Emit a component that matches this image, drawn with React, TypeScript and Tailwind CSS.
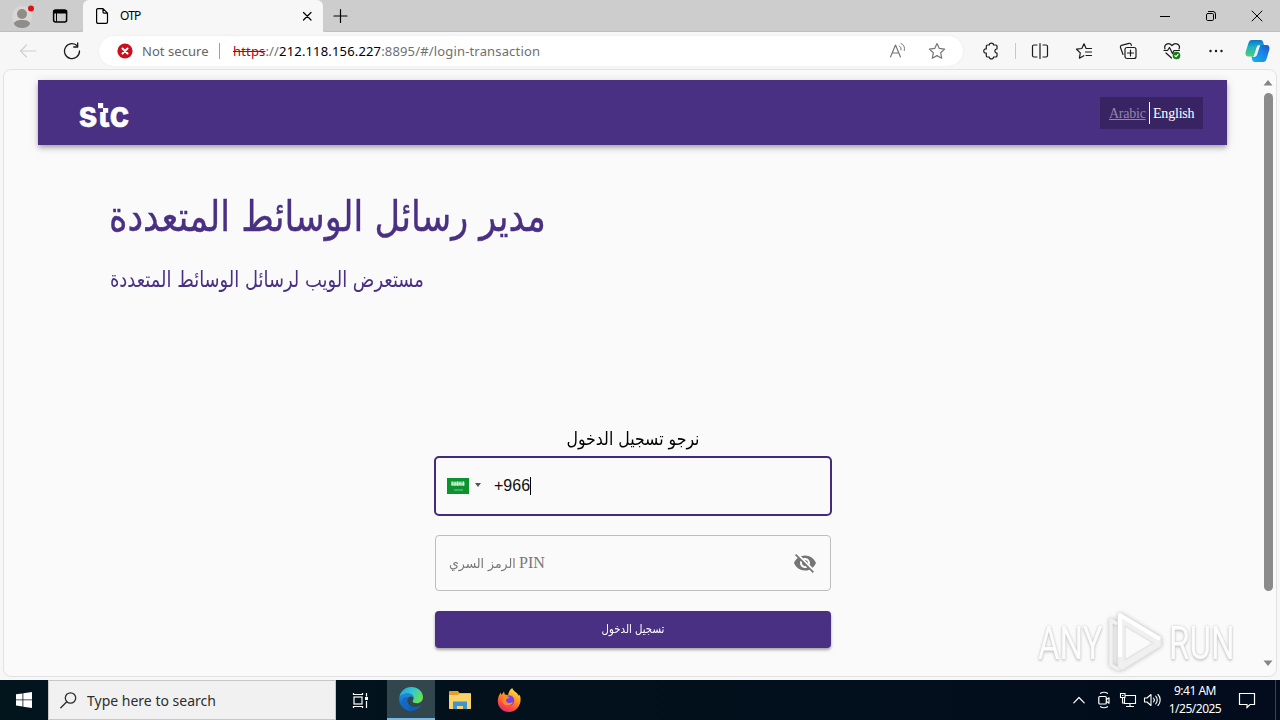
import type { ReactNode } from "react";

function Icon({ w = 20, h = 20, children, className = "" }: { w?: number; h?: number; children: ReactNode; className?: string }) {
  return (
    <svg
      width={w}
      height={h}
      viewBox={`0 0 ${w} ${h}`}
      fill="none"
      stroke="currentColor"
      strokeWidth="1.2"
      strokeLinecap="round"
      strokeLinejoin="round"
      className={`block shrink-0 ${className}`}
    >
      {children}
    </svg>
  );
}

function TitleBar() {
  return (
    <div className="flex h-8 shrink-0 bg-[#cdcdcd] text-black">
      <div className="flex w-[83px] shrink-0 items-center rounded-br-[4px] border-b border-[#bdbdbd] pl-[11px]">
        <svg width="26" height="28" viewBox="0 0 26 28" className="block">
          <circle cx="11" cy="14" r="10" fill="#d9d7d5" />
          <circle cx="11" cy="12" r="5" fill="#8f8c89" />
          <path d="M3 22c0-2.500 3-4 8-4s8 1.500 8 4c-2 3-5 4-8 4s-6-1-8-4z" fill="#8f8c89" />
          <circle cx="20" cy="6.500" r="3" fill="#e0101b" />
        </svg>
        <Icon w={16} h={16} className="ml-[15px]">
          <rect x="1.600" y="2" width="13" height="12" rx="2" strokeWidth="1.500" />
          <path d="M2 2.500h12.500v2.500h-12.500z" fill="currentColor" />
          <path d="M4.500 4v9.500" strokeWidth="1" />
        </Icon>
      </div>
      <div className="flex w-[240px] shrink-0 items-center rounded-t-[6px] bg-[#f7f7f7] pl-[12px] pr-[10px]">
        <Icon w={14} h={18}>
          <path d="M3 1.600h5l4.500 4.500v8.900a1.400 1.400 0 0 1-1.400 1.400H3a1.400 1.400 0 0 1-1.400-1.400V3A1.400 1.400 0 0 1 3 1.600zM8 1.600v3.500a1 1 0 0 0 1 1h3.500" />
        </Icon>
        <span className="ml-[11px] flex-1 text-[12px] leading-4 tracking-[-0.8px]">OTP</span>
        <Icon w={12} h={12}>
          <path d="M2.500 2.500l7.500 7.500M10 2.500l-7.500 7.500" />
        </Icon>
      </div>
      <div className="flex flex-1 items-center rounded-bl-[4px] border-b border-[#bdbdbd] pl-[9px]">
        <Icon w={16} h={16}>
          <path d="M8.500 1.500v13M2 8h13" />
        </Icon>
        <div className="flex-1" />
        <div className="flex w-[128px] items-center">
          <Icon w={12} h={12} className="ml-[7px]">
            <path d="M1 6.500h10" strokeLinecap="butt" strokeWidth="1" />
          </Icon>
          <Icon w={12} h={12} className="ml-[34px]">
            <rect x="1.500" y="3.500" width="7" height="7" rx="1.200" strokeWidth="1" />
            <path d="M3.500 1.500h4.500a2.500 2.500 0 0 1 2.500 2.500v4.500" strokeWidth="1" />
          </Icon>
          <Icon w={12} h={12} className="ml-[34px]">
            <path d="M1 1l10 10M11 1l-10 10" strokeWidth="1" />
          </Icon>
        </div>
      </div>
    </div>
  );
}

function Toolbar() {
  return (
    <div className="flex h-[38px] shrink-0 items-center bg-[#f7f7f7] text-[#1b1b1b]">
      <Icon w={18} h={16} className="ml-[19px] text-[#d0d0d0]">
        <path d="M17 8h-15M7.500 2l-6 6 6 6" />
      </Icon>
      <Icon w={18} h={18} className="ml-[26px]">
        <path d="M14.500 4A7.500 7.500 0 1 0 16.500 9M14.700 1v4h-4" strokeWidth="1.300" />
      </Icon>
      <div className="ml-[18px] flex h-[30px] w-[864px] shrink-0 items-center rounded-full bg-white pl-[18px] pr-[17px] shadow-[0_0_2px_#e4e4e4]">
        <svg width="16" height="16" viewBox="0 0 16 16" className="block shrink-0">
          <circle cx="8" cy="8" r="7.600" fill="#c9101c" />
          <path d="M5.500 5.500l5 5M10.500 5.500l-5 5" stroke="#fff" strokeWidth="2" strokeLinecap="round" />
        </svg>
        <span className="ml-[9px] w-[68px] whitespace-nowrap text-[13px] leading-5 tracking-[0.05px] text-[#666]">Not secure</span>
        <div className="ml-[9px] h-4 w-px bg-[#a0a0a0]" />
        <div className="ml-[13px] flex-1 whitespace-nowrap text-[13px] leading-5 tracking-[0.16px] text-[#707070]">
          <span className="text-[#b00610] line-through">https</span>://<span className="text-black">212.118.156.227</span>:8895/#/login-transaction
        </div>
        <Icon w={18} h={18} className="text-[#767676]">
          <path d="M1.500 15L6.500 3l5 12M3.200 11h6.600" />
          <path d="M10.500 4a3.500 3.500 0 0 1 1.500 4M12 1.500a6 6 0 0 1 3.300 7" strokeWidth="1" />
        </Icon>
        <Icon w={18} h={18} className="ml-[21px] text-[#767676]">
          <path d="M9 1.500l2.300 4.900 5.300.7-3.900 3.700 1 5.400L9 13.600l-4.700 2.600 1-5.400-3.900-3.700 5.300-.7z" />
        </Icon>
      </div>
      <Icon w={18} h={18} className="ml-[19px]">
        <path d="M5.500 3H7.300c-.2-2.500 4.400-2.500 4.200 0h2.300A1.200 1.200 0 0 1 15 4.200V7c-2.800-.2-2.800 4.200 0 4v2.800a1.200 1.200 0 0 1-1.200 1.200h-2.300c.2 2.500-4.400 2.500-4.200 0H5.500a1.200 1.200 0 0 1-1.200-1.200V11.100c-3.400.6-3.400-4.800 0-4.200V4.200A1.200 1.200 0 0 1 5.500 3z" />
      </Icon>
      <div className="ml-[15px] h-4 w-px bg-[#c8c8c8]" />
      <Icon w={18} h={18} className="ml-[15px]">
        <path d="M6 3H3A1.500 1.500 0 0 0 1.500 4.500v9A1.500 1.500 0 0 0 3 15h3M12 3h3a1.500 1.500 0 0 1 1.500 1.500v9A1.500 1.500 0 0 1 15 15h-3M9 1.500v15" />
      </Icon>
      <Icon w={18} h={18} className="ml-[26px]">
        <path d="M16.500 6.500h-5.400L9 1.800 6.800 6.500 1.500 7.200l3.800 3.700-.9 5.300 4.400-2.500M10.500 10h6M11 13.500h5.500" />
      </Icon>
      <Icon w={18} h={18} className="ml-[26px]">
        <rect x="6" y="5.500" width="11" height="11" rx="2" />
        <path d="M11.500 8v6M8.500 11h6M4 12.500l-2.500-7a1.700 1.700 0 0 1 1-2.200L10 1.300a1.700 1.700 0 0 1 2.100 1.200l.3.900" />
      </Icon>
      <Icon w={18} h={18} className="ml-[26px]">
        <path d="M2 7C.5 2.500 5.500-.4 9 3.500c3.500-3.900 9-1 7 3.500M3 11l5.500 5M1 8.500h3.500l2-3 3 6 1.500-3h5.500" />
        <circle cx="13.500" cy="13.500" r="3.800" fill="#107c10" stroke="none" />
        <path d="M11.900 13.700l1.200 1 2-2.300" stroke="#fff" />
      </Icon>
      <Icon w={18} h={18} className="ml-[26px]">
        <path d="M3.500 9h.01M9 9h.01M14.500 9h.01" strokeWidth="2.400" />
      </Icon>
      <svg width="25" height="24" viewBox="0 0 25 24" className="ml-[20px] block shrink-0">
        <defs>
          <linearGradient id="cpA" x1="0" y1="0" x2="0" y2="1">
            <stop offset="0" stopColor="#0f73c9" />
            <stop offset=".45" stopColor="#1fb6c1" />
            <stop offset="1" stopColor="#51d06b" />
          </linearGradient>
          <linearGradient id="cpB" x1="0" y1="1" x2="1" y2="0">
            <stop offset="0" stopColor="#15b5ee" />
            <stop offset=".55" stopColor="#1987e8" />
            <stop offset="1" stopColor="#1c58c9" />
          </linearGradient>
        </defs>
        <path d="M7 1h8.500c2 0 2.300 1 2.900 3l.6 2h-4.500c-2 0-2.500 1-3 3l-2 6.500C9 17 8.500 17.500 6.500 17.500H4C1 17.500 0 15.500.8 12.500l2.500-8C4 2 5 1 7 1z" fill="url(#cpA)" />
        <path d="M18 23H10c-2 0-2.500-1-3-3l-.6-2.500C9.300 17.500 10 17 10.800 14.500l2-6C13.500 6.500 14 6 16 6h5c3 0 4 2 3.200 5l-2.500 8.500C21 22 20 23 18 23z" fill="url(#cpB)" />
        <path d="M9.500 15.500l2.200-6.500c.7-2.200 1.600-2.800 4-2.800-.9.800-1 1.500-1.500 3l-2.200 6.500c-.6 1.800-1.500 2.300-4.200 2.300 1-.5 1.300-1.200 1.700-2.500z" fill="#f7f7f7" />
      </svg>
    </div>
  );
}

function StcLogo() {
  return (
    <svg width="60" height="60" viewBox="0 0 60 60" className="block" fill="#fff">
      <text x="0.500" y="44" textLength="51" lengthAdjust="spacingAndGlyphs" fontFamily="Inter, sans-serif" fontWeight="700" fontSize="36" stroke="#fff" strokeWidth="0.500">
        stc
      </text>
      <rect x="17.500" y="14" width="15" height="15" fill="#493083" />
      <rect x="20" y="20" width="5.200" height="5.200" />
      <rect x="25" y="25" width="5.200" height="4.800" />
    </svg>
  );
}

function SiteHeader() {
  return (
    <header className="flex h-[65px] w-[1189px] items-center justify-between bg-[#493083] pl-[40px] pr-[24px] shadow-[0_2px_4px_-1px_rgba(0,0,0,0.2),0_4px_5px_rgba(0,0,0,0.14),0_1px_10px_rgba(0,0,0,0.12)]">
      <StcLogo />
      <div className="flex h-8 w-[103px] items-center bg-[#382463] pl-[9px] font-['Liberation_Serif',serif] text-[14px]">
        <span className="w-[37px] pt-[2px] tracking-[-0.25px] text-[#9486ac] underline">Arabic</span>
        <span className="ml-[3px] h-[22px] w-px bg-white" />
        <span className="ml-[3px] pt-[2px] tracking-[-0.2px] text-white">English</span>
      </div>
    </header>
  );
}

function LoginForm() {
  return (
    <div className="ml-[431px] mt-[126px] flex w-[396px] flex-col">
      <div className="flex h-[31px] items-start justify-center">
        <span className="inline-block origin-center scale-x-[0.875] whitespace-nowrap text-[18px] leading-[28px] text-black">نرجو تسجيل الدخول</span>
      </div>
      <div className="-mx-px flex h-[60px] items-center rounded-[5px] border-2 border-[#432b7b] pl-[11px]">
        <svg width="22" height="16" viewBox="0 0 22 16" className="block">
          <rect width="22" height="16" fill="#0b932d" />
          <rect x="4.500" y="3.500" width="13" height="4.500" fill="#7cc98e" />
          <path d="M5 3.500v4M8 4v3.500M10.500 3.500v4M13 4v3M16.500 3.500v4M4.500 6h13" stroke="#d8f0dd" strokeWidth="1" fill="none" />
          <path d="M7 12h9" stroke="#7cc98e" strokeWidth="1" />
        </svg>
        <svg width="6" height="4" viewBox="0 0 6 4" className="mb-[2px] ml-[6px] block">
          <path d="M0 0h6l-3 4z" fill="#555" />
        </svg>
        <span className="ml-[13px] font-['Liberation_Sans',sans-serif] text-[16px] text-[#111]">+966</span>
        <span className="h-[18px] w-px bg-black" />
      </div>
      <div className="mt-[19px] flex h-[56px] items-center justify-between rounded-[4px] border border-[#bdbdbd] pl-[13px] pr-[13px]">
        <div className="flex items-baseline whitespace-nowrap text-[#777]">
          <span className="w-[66px] text-[13px]">
            <span className="inline-block origin-left scale-x-[0.96]">الرمز السري</span>
          </span>
          <span className="ml-[4px] font-['Liberation_Serif',serif] text-[16px]">PIN</span>
        </div>
        <svg width="24" height="24" viewBox="0 0 24 24" fill="#757575" className="block">
          <path d="M12 7c2.760 0 5 2.240 5 5 0 .65-.13 1.260-.36 1.830l2.920 2.920c1.510-1.260 2.700-2.890 3.430-4.750-1.730-4.390-6-7.500-11-7.500-1.400 0-2.740.25-3.980.7l2.160 2.160C10.740 7.130 11.350 7 12 7zM2 4.270l2.280 2.280.46.46C3.080 8.300 1.780 10.020 1 12c1.730 4.390 6 7.500 11 7.500 1.550 0 3.030-.3 4.380-.84l.42.42L19.730 22 21 20.730 3.270 3 2 4.270zM7.530 9.800l1.550 1.550c-.05.21-.08.43-.08.65 0 1.660 1.340 3 3 3 .22 0 .44-.03.65-.08l1.550 1.550c-.67.33-1.410.53-2.200.53-2.760 0-5-2.240-5-5 0-.79.2-1.530.53-2.200zm4.310-.78l3.150 3.150.02-.16c0-1.660-1.340-3-3-3l-.17.01z" />
        </svg>
      </div>
      <button className="mt-[20px] flex h-[37px] items-center justify-center rounded-[4px] bg-[#493083] pb-[2px] text-[12px] text-white shadow-[0_2px_3px_rgba(0,0,0,0.35)]">
        <span className="inline-block scale-x-[0.85] whitespace-nowrap">تسجيل الدخول</span>
      </button>
    </div>
  );
}

function Watermark() {
  return (
    <div className="absolute bottom-[5px] right-[34px] flex h-[64px] w-[208px] items-center font-['Roboto',sans-serif] text-[46px] text-[#fcfcfc] [text-shadow:0_0_3px_#c4c4c4,0_2px_3px_#cfcfcf]">
      <span className="w-[67px] origin-left scale-x-[0.72] font-normal">ANY</span>
      <svg width="62" height="64" viewBox="0 0 62 64" className="block shrink-0 drop-shadow-[0_0_2px_#b5b5b5]" fill="none" strokeLinejoin="round">
        <path d="M12 13L6 9v45l7 4 6-3" stroke="#f1f1f1" strokeWidth="3.500" />
        <path d="M16 4l40 24v7L17 59l-4-2V6z" fill="#f0f0f0" stroke="#e9e9e9" strokeWidth="1" />
        <path d="M15 46V4l40 24" stroke="#fff" strokeWidth="4" />
        <path d="M20 15l28 17-28 17z" fill="#fafafa" stroke="#e6e6e6" strokeWidth="1.500" />
      </svg>
      <span className="ml-[2px] origin-left scale-x-[0.72] font-normal">RUN</span>
    </div>
  );
}

function PageFrame() {
  return (
    <div className="mx-[3px] flex h-[608px] overflow-hidden rounded-[8px] border border-[#e2e2e2] bg-[#fafafa]">
      <main className="w-[1256px] shrink-0 pt-[10px] font-['DejaVu_Sans',sans-serif]">
        <div className="pl-[34px]">
          <SiteHeader />
        </div>
        <h1 className="ml-[105px] mt-[43px] h-[56px] w-[436px] origin-left scale-x-[0.838] whitespace-nowrap text-[42px] leading-[58px] text-[#493083] [-webkit-text-stroke:0.4px_#493083]">
          مدير رسائل الوسائط المتعددة
        </h1>
        <h2 className="ml-[106px] mt-[17px] h-[38px] w-[313px] origin-left scale-x-[0.813] whitespace-nowrap text-[22px] leading-[38px] text-[#493083]">مستعرض الويب لرسائل الوسائط المتعددة</h2>
        <LoginForm />
      </main>
      <div className="flex w-[16px] flex-col items-center pt-[10px]">
        <svg width="10" height="6" viewBox="0 0 10 6" className="block">
          <path d="M.5 5.500L5 0l4.500 5.500z" fill="#858585" />
        </svg>
        <div className="mt-[7px] h-[498px] w-[9px] rounded-full bg-[#8b8b8b]" />
        <svg width="10" height="6" viewBox="0 0 10 6" className="mt-[69px] block">
          <path d="M.5.5L5 6 9.500.5z" fill="#858585" />
        </svg>
      </div>
    </div>
  );
}

function Taskbar() {
  return (
    <div className="flex h-[40px] shrink-0 items-center bg-gradient-to-r from-[#02151d] to-[#020c1c] text-white">
      <div className="flex w-[48px] justify-center">
        <svg width="16" height="16" viewBox="0 0 16 16" fill="#fff" className="block">
          <path d="M0 2.300l6.500-.9v6.100H0zM7.300 1.300L16 0v7.500H7.300zM0 8.300h6.500v6.200L0 13.600zM7.300 8.300H16V16l-8.700-1.300z" />
        </svg>
      </div>
      <div className="flex h-full w-[288px] items-center border border-[#c6c6c6] bg-[#f1f1f1] pl-[11px] text-[#2d2d2d]">
        <Icon w={17} h={17}>
          <circle cx="10.500" cy="6" r="5.200" strokeWidth="1.300" />
          <path d="M6.800 9.800l-6 6" strokeWidth="1.300" />
        </Icon>
        <span className="ml-[10px] whitespace-nowrap text-[14px]">Type here to search</span>
      </div>
      <div className="flex w-[51px] justify-center pr-[3px]">
        <Icon w={17} h={17}>
          <g strokeLinecap="butt" strokeLinejoin="miter">
            <rect x="2" y="5" width="8" height="7" />
            <path d="M1.500 1v1.500h9V1M1.500 16v-1.500h9V16M14.500 1v3.500M14.500 9v7" />
            <rect x="13" y="5" width="3" height="3" fill="currentColor" stroke="none" />
          </g>
        </Icon>
      </div>
      <div className="flex h-full w-[48px] items-center justify-center border-b-2 border-[#76b9ed] bg-[#32464d]">
        <svg width="24" height="24" viewBox="0 0 24 24" className="block">
          <defs>
            <linearGradient id="egA" x1="0" y1="0" x2="1" y2=".4">
              <stop offset="0" stopColor="#229fdf" />
              <stop offset=".6" stopColor="#35c9c9" />
              <stop offset="1" stopColor="#65df58" />
            </linearGradient>
            <linearGradient id="egB" x1="0" y1="0" x2="0" y2="1">
              <stop offset="0" stopColor="#1a8fe0" />
              <stop offset="1" stopColor="#0a56b5" />
            </linearGradient>
          </defs>
          <path d="M.3 11C.8 4.700 6 0 12.300 0 19 0 24 4.700 24 10.300c0 3.500-2.700 6-6.200 6-2.800 0-4.200-1-4.200-2 0-.8 1-1.200 1-3 0-2.500-2.200-4.800-5.700-4.800C5 6.500 1.500 8 .3 11z" fill="url(#egA)" />
          <path d="M.2 11.500C1 8.500 4.300 6.500 8.500 6.500c3.500 0 6.100 2.300 6.100 4.800-1-1.500-2.500-2-3.800-1.500-5 2.500-2.600 9.700 4.200 10.200 3 .2 5-.7 7.200-2C20 21.500 16.500 24 12 24 5 24-.5 18 .2 11.500z" fill="url(#egB)" />
          <path d="M9.500 10.800C4.800 15 8 22.500 14 23.800 7 25 1 19 3.500 13c1-2.500 3.300-3.200 6-2.200z" fill="#1269bf" />
        </svg>
      </div>
      <div className="flex w-[49px] justify-center">
        <svg width="22" height="20" viewBox="0 0 22 20" className="block">
          <path d="M0 2a1 1 0 0 1 1-1h8l1.500 2H21a1 1 0 0 1 1 1v14a1 1 0 0 1-1 1H1a1 1 0 0 1-1-1z" fill="#e3a02c" />
          <path d="M0 5l9 0 1.500-1.500H22V18a1 1 0 0 1-1 1H1a1 1 0 0 1-1-1z" fill="#fbd36b" />
          <path d="M4 19v-7.500h14V19h-4v-3H8v3z" fill="#3d96cf" />
        </svg>
      </div>
      <div className="flex w-[49px] justify-center">
        <svg width="24" height="24" viewBox="0 0 24 24" className="block">
          <defs>
            <linearGradient id="ffA" x1=".8" y1="0" x2=".3" y2="1">
              <stop offset="0" stopColor="#fff14a" />
              <stop offset=".4" stopColor="#ff9a20" />
              <stop offset=".75" stopColor="#ff4b3e" />
              <stop offset="1" stopColor="#e22878" />
            </linearGradient>
          </defs>
          <path d="M12 24C5.500 24 .8 19.300.8 13c0-3 1-6 3-8.500L4.500 7 7 3.500l.8 3L11 7c.5-3 2-5.500 4.300-7 .3 3 5 4 6.700 8l.7-1.500C26 15 20 24 12 24z" fill="url(#ffA)" />
          <circle cx="12" cy="12.500" r="5.300" fill="#7542e5" />
          <path d="M6 9c2-1.500 5-1 6.500.5-1 1-3.500 1-3.500 3 0 2.500 4 3.500 7 1.500-1 4-7.500 5-10 1-1-2-.8-4.500 0-6z" fill="#ff8a24" />
        </svg>
      </div>
      <div className="flex-1" />
      <Icon w={12} h={8}>
        <path d="M.8 6.800L6 1.500l5.200 5.300" />
      </Icon>
      <Icon w={14} h={18} className="ml-[12px]">
        <rect x="1.800" y="5.500" width="7.500" height="7.500" rx="1" />
        <path d="M9.500 8.500l2.500-1.700v5.400L9.500 10.500M3.500 2.300c2-1.200 5-1.200 7 0M3.500 15.700c2 1.200 5 1.200 7 0" />
      </Icon>
      <Icon w={18} h={16} className="ml-[8px]">
        <g strokeLinecap="butt" strokeLinejoin="miter" strokeWidth="1.100">
          <path d="M6 3.500h10.500v8H5.500V6M11 11.500v3M7 14.500h8M1.500 1.500h4.500v4H1.500zM3.500 5.500v5.500h2M3 3.500h1.500" />
        </g>
      </Icon>
      <Icon w={18} h={16} className="ml-[6px]">
        <path d="M1.500 6v4h2.500l4 3.500v-11L4 6zM10.500 6a3 3 0 0 1 0 4M12.700 4.200a5.500 5.500 0 0 1 0 7.600M15 2.500a8 8 0 0 1 0 11" strokeWidth="1.100" />
      </Icon>
      <div className="ml-[3px] flex w-[62px] flex-col items-center whitespace-nowrap text-[12px] leading-[18px] tracking-[-0.5px]">
        <span>9:41 AM</span>
        <span>1/25/2025</span>
      </div>
      <Icon w={18} h={18} className="ml-[12px]">
        <path d="M1.500 2.500h15v11h-4.500l-3 3v-3h-7.500z" strokeLinejoin="miter" />
      </Icon>
      <div className="ml-[19px] h-full w-[5px] border-l border-[#3a4450]" />
    </div>
  );
}

export default function App() {
  return (
    <div className="relative flex h-[720px] w-[1280px] flex-col overflow-hidden bg-[#f7f7f7] font-['Noto_Sans','Open_Sans',sans-serif]">
      <TitleBar />
      <Toolbar />
      <div className="relative -mt-px h-[611px] shrink-0">
        <PageFrame />
        <Watermark />
      </div>
      <Taskbar />
    </div>
  );
}
